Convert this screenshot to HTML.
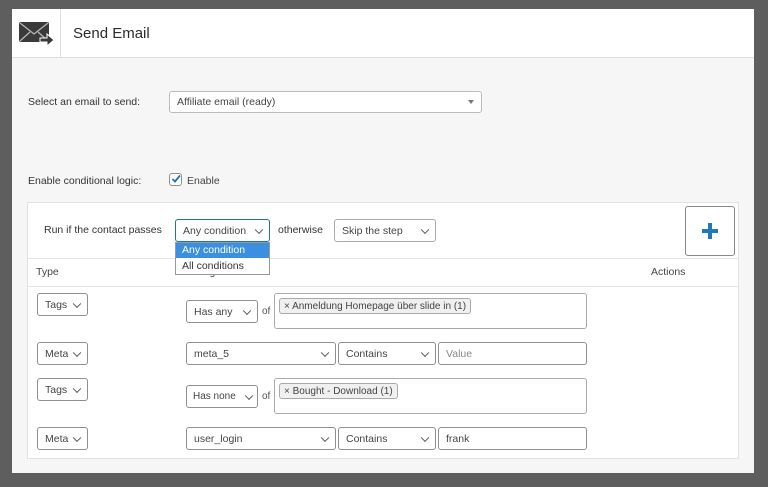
<!DOCTYPE html>
<html><head><meta charset="utf-8"><style>
*{box-sizing:border-box;margin:0;padding:0}
body{width:768px;height:487px;background:#5e5e5e;font-family:"Liberation Sans",sans-serif;color:#333;position:relative;overflow:hidden;font-size:11px}
.a{position:absolute}
.panel{left:12px;top:9px;width:742px;height:464px;background:#f6f6f6}
.hdr{left:12px;top:9px;width:742px;height:49px;background:#fff;border-bottom:1px solid #ddd}
.sel{position:absolute;background:#fff;border:1px solid #8c8f94;border-radius:3px;font-size:10.5px;color:#444;padding-left:7px;display:flex;align-items:center;white-space:nowrap}
.sel .c{position:absolute;right:7px;top:50%;width:6px;height:6px;border-right:1.5px solid #555;border-bottom:1.5px solid #555;transform:translateY(-70%) rotate(45deg)}
.tag{position:absolute;background:#f0f0f0;border:1px solid #aaa;border-radius:3px;font-size:10px;color:#444;padding:1px 4px;height:16px;line-height:13px}
.of{position:absolute;font-size:10px;color:#555}
</style></head><body>
<div class="a panel"></div>
<div class="a hdr"></div>
<div class="a" style="left:60px;top:9px;width:1px;height:48px;background:#ddd"></div>
<svg class="a" style="left:18px;top:21px" width="38" height="27" viewBox="0 0 38 27">
<rect x="1" y="1" width="30" height="20" rx="2" fill="#3a3a3a"/>
<path d="M2 2 L16 13 L30 2 M2 20 L12 11 M30 20 L20 11" stroke="#bbb" stroke-width="1.2" fill="none"/>
<path d="M22 17 h7 v-4 l7 6 l-7 6 v-4 h-7 z" fill="#3a3a3a" stroke="#fff" stroke-width="1"/>
</svg>
<div class="a" style="left:73px;top:25px;font-size:15px;color:#2b2b2b;">Send Email</div>
<div class="a" style="left:28px;top:96px;font-size:10.5px;color:#333">Select an email to send:</div>
<div class="sel" style="left:169px;top:91px;width:313px;height:22px;border-color:#bbb">Affiliate email (ready)<span style="position:absolute;right:7px;top:8px;border-left:3px solid transparent;border-right:3px solid transparent;border-top:4px solid #777"></span></div>
<div class="a" style="left:28px;top:175px;font-size:10.5px;color:#333">Enable conditional logic:</div>
<div class="a" style="left:169px;top:173px;width:13px;height:13px;border:1px solid #8c8f94;border-radius:3px;background:#fff"></div>
<svg class="a" style="left:170px;top:173px" width="12" height="12"><path d="M2.5 6 L5 8.5 L10 2.5" stroke="#2271b1" stroke-width="1.8" fill="none"/></svg>
<div class="a" style="left:187px;top:175px;font-size:10.5px;color:#444">Enable</div>
<div class="a" style="left:27px;top:202px;width:712px;height:257px;background:#fff;border:1px solid #e2e2e2"></div>
<div class="a" style="left:28px;top:258px;width:710px;height:1px;background:#e4e4e4"></div>
<div class="a" style="left:28px;top:286px;width:710px;height:1px;background:#e4e4e4"></div>
<div class="a" style="left:44px;top:224px;font-size:10.5px;color:#333">Run if the contact passes</div>
<div class="sel" style="left:175px;top:219px;width:95px;height:23px;border-color:#2271b1">Any condition<span class="c"></span></div>
<div class="a" style="left:278px;top:224px;font-size:10.5px;color:#333">otherwise</div>
<div class="sel" style="left:334px;top:219px;width:102px;height:23px;border-color:#aaa">Skip the step<span class="c"></span></div>
<div class="a" style="left:685px;top:206px;width:50px;height:50px;border:1px solid #888;border-radius:3px;background:#fff"></div>
<div class="a" style="left:702px;top:229px;width:16px;height:4px;background:#1e7ab8"></div>
<div class="a" style="left:708px;top:223px;width:4px;height:16px;background:#1e7ab8"></div>
<div class="a" style="left:36px;top:266px;font-size:10.5px;color:#444">Type</div>
<div class="a" style="left:185px;top:266px;font-size:10.5px;color:#444">Config</div>
<div class="a" style="left:651px;top:266px;font-size:10.5px;color:#444">Actions</div>
<div class="a" style="left:175px;top:242px;width:95px;height:33px;background:#fff;border:1px solid #999"></div>
<div class="a" style="left:176px;top:243px;width:93px;height:15px;background:#3b8fe0;color:#fff;font-size:10.5px;padding:1px 6px">Any condition</div>
<div class="a" style="left:182px;top:260px;font-size:10.5px;color:#333">All conditions</div>

<div class="sel" style="left:37px;top:293px;width:51px;height:23px">Tags<span class="c"></span></div>
<div class="sel" style="left:186px;top:300px;width:72px;height:23px">Has any<span class="c"></span></div>
<div class="of" style="left:262px;top:306px">of</div>
<div class="a" style="left:274px;top:293px;width:313px;height:36px;border:1px solid #aaa;border-radius:3px;background:#fff"></div>
<div class="tag" style="left:279px;top:298px">× Anmeldung Homepage über slide in (1)</div>

<div class="sel" style="left:37px;top:342px;width:51px;height:23px">Meta<span class="c"></span></div>
<div class="sel" style="left:186px;top:342px;width:150px;height:23px">meta_5<span class="c"></span></div>
<div class="sel" style="left:338px;top:342px;width:98px;height:23px">Contains<span class="c"></span></div>
<div class="sel" style="left:438px;top:342px;width:149px;height:23px;color:#888">Value</div>

<div class="sel" style="left:37px;top:378px;width:51px;height:23px">Tags<span class="c"></span></div>
<div class="sel" style="left:186px;top:385px;width:72px;height:23px;font-size:10px;padding-left:6px">Has none<span class="c" style="right:5px"></span></div>
<div class="of" style="left:262px;top:391px">of</div>
<div class="a" style="left:274px;top:378px;width:313px;height:36px;border:1px solid #aaa;border-radius:3px;background:#fff"></div>
<div class="tag" style="left:279px;top:383px">× Bought - Download (1)</div>

<div class="sel" style="left:37px;top:427px;width:51px;height:23px">Meta<span class="c"></span></div>
<div class="sel" style="left:186px;top:427px;width:150px;height:23px">user_login<span class="c"></span></div>
<div class="sel" style="left:338px;top:427px;width:98px;height:23px">Contains<span class="c"></span></div>
<div class="sel" style="left:438px;top:427px;width:149px;height:23px">frank</div>
</body></html>
